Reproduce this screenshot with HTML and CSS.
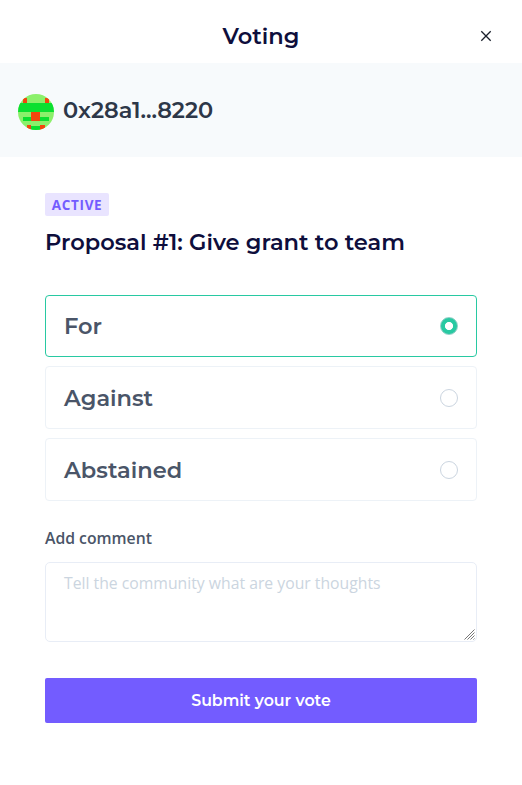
FILE: index.html
```html
<!DOCTYPE html>
<html lang="en">
<head>
<meta charset="utf-8">
<title>Voting</title>
<link rel="stylesheet" href="styles.css">
</head>
<body>
<header class="header">
  <h1 class="header-title heading">Voting</h1>
  <button class="close" aria-label="Close"><svg width="12" height="12" viewBox="0 0 12 12"><path d="M1.3 1.3l9.4 9.4M10.7 1.3l-9.4 9.4"/></svg></button>
</header>
<section class="account">
  <svg class="avatar" width="36" height="36" viewBox="0 0 36 36" shape-rendering="crispEdges">
    <rect width="36" height="36" fill="#8bf06b"/>
    <path fill="#0be030" d="M0 9h36v9H0zM5 23h26v4H5zM13 32h9v4h-9z"/>
    <path fill="#f2460d" d="M5 4h4v5H5zM27 4h4v5h-4zM13 18h9v9h-9zM9 31h4v5H9zM22 31h5v5h-5z"/>
  </svg>
  <span class="heading">0x28a1...8220</span>
</section>
<main class="content">
  <span class="badge">ACTIVE</span>
  <h2 class="proposal heading">Proposal #1: Give grant to team</h2>
  <div class="options">
    <label class="option selected"><span class="heading">For</span><input type="radio" name="vote" checked></label>
    <label class="option"><span class="heading">Against</span><input type="radio" name="vote"></label>
    <label class="option"><span class="heading">Abstained</span><input type="radio" name="vote"></label>
  </div>
  <label class="comment-label" for="comment">Add comment</label>
  <div class="comment-box">
    <textarea id="comment" class="comment" placeholder="Tell the community what are your thoughts"></textarea>
    <svg class="grip" width="11" height="11" viewBox="0 0 11 11"><path d="M.5 10.5l10-10M3.5 10.5l7-7M6.5 10.5l4-4M9.5 10.5l1-1"/></svg>
  </div>
  <button class="submit">Submit your vote</button>
</main>
</body>
</html>
```
FILE: styles.css
```css
* { box-sizing: border-box; }
body { margin: 0; background: #fff; font-family: "Open Sans", sans-serif; color: #4a5568; }
.heading { margin: 0; font: 600 22.53px/30px Montserrat, Inter, sans-serif; }
.header { height: 63px; display: grid; grid-template-columns: 63px 1fr 63px; align-items: center; padding: 8px 0 0; }
.header-title { grid-column: 2; justify-self: center; color: #0e0e3c; }
.close { grid-column: 3; justify-self: center; display: flex; margin-right: 10px; padding: 0; border: 0; background: none; }
.close path { fill: none; stroke: #1a202c; stroke-width: 1.3; }
.account { height: 94px; display: flex; align-items: center; gap: 9px; padding: 4px 18px 0; background: #f7fafc; color: #2d3748; }
.account .heading { margin-bottom: 4px; }
.avatar { border-radius: 50%; }
.content { padding: 36px 45px 0; }
.badge { display: block; width: 64px; height: 23px; border-radius: 2px; background: #e9e4ff; color: #735cff; font-size: 13.5px; font-weight: 700; line-height: 24px; letter-spacing: .7px; text-align: center; }
.proposal { margin-top: 11px; color: #0e0e3c; }
.options { display: grid; gap: 9px; margin-top: 38px; }
.option { height: 63px; display: flex; align-items: center; justify-content: space-between; padding: 0 18px; border: 1px solid #edf2f7; border-radius: 4px; }
.option.selected { height: 62px; border-color: #28c9a2; }
.option input { appearance: none; width: 18px; height: 18px; margin: 0; border: 1px solid #cbd5e0; border-radius: 50%; }
.option input:checked { border-color: #8fcfc6; background: radial-gradient(circle, #fff 3.7px, #28c9a2 4.4px); }
.comment-label { display: block; margin-top: 25px; font-size: 15.75px; font-weight: 600; line-height: 24px; }
.comment-box { position: relative; margin-top: 12px; }
.comment { display: block; width: 100%; height: 80px; margin: 0; padding: 8px 18px; border: 1px solid #e8edf6; border-radius: 5px; font: 15.75px/24px "Open Sans", sans-serif; resize: none; }
.comment::placeholder { color: #cbd5e0; }
.grip { position: absolute; right: 2px; bottom: 2px; fill: none; stroke: #777; stroke-width: 1; pointer-events: none; }
.submit { display: block; width: 100%; height: 45px; margin-top: 36px; padding: 1px 0 0; border: 0; border-radius: 2px; background: #735cff; color: #fff; font: 600 15.75px/24px Montserrat, Inter, sans-serif; }
```
